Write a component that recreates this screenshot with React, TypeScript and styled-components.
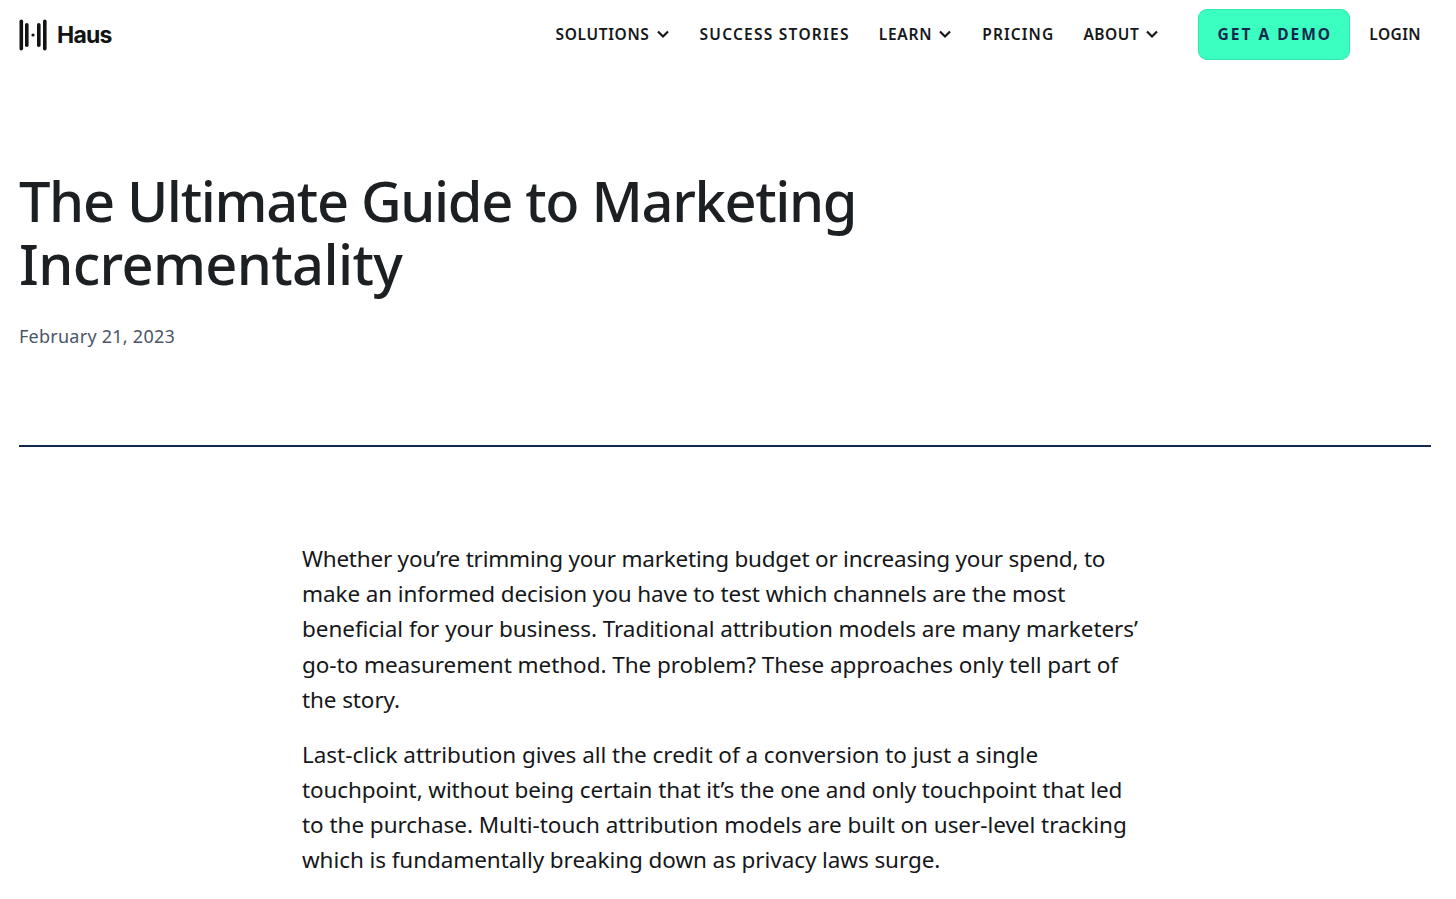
import React from 'react';
import styled, { createGlobalStyle } from 'styled-components';

const GlobalStyle = createGlobalStyle`
  html, body {
    margin: 0;
    padding: 0;
    background: #ffffff;
    font-family: "Noto Sans", "Open Sans", sans-serif;
  }
`;

const Page = styled.div`
  width: 1456px;
  height: 899px;
  overflow: hidden;
`;

const Header = styled.header`
  height: 69px;
  display: flex;
  align-items: center;
  justify-content: space-between;
  padding: 0 35px 0 19px;
`;

const Logo = styled.div`
  display: flex;
  align-items: center;
  gap: 9px;
  color: #111314;
`;

const LogoText = styled.span`
  font-family: "Inter", sans-serif;
  font-size: 23px;
  font-weight: 700;
  letter-spacing: -0.8px;
`;

const Nav = styled.nav`
  display: flex;
  align-items: center;
`;

const NavItem = styled.a<{ $gap?: number; $tracking?: number }>`
  display: flex;
  align-items: center;
  gap: 6px;
  margin-right: ${(p) => p.$gap ?? 29}px;
  padding-bottom: 2px;
  font-size: 15.5px;
  font-weight: 600;
  letter-spacing: ${(p) => p.$tracking ?? 0.55}px;
  color: #15171a;
  white-space: nowrap;
`;

const DemoButton = styled.a`
  display: flex;
  align-items: center;
  justify-content: center;
  width: 152px;
  height: 51px;
  margin-right: 19px;
  padding: 0 0 1px 1px;
  box-sizing: border-box;
  background: #3bffc1;
  border: 1px solid #2ee8b0;
  border-radius: 9px;
  font-size: 15.5px;
  font-weight: 700;
  letter-spacing: 2px;
  color: #12294d;
`;

const Hero = styled.section`
  padding: 100px 19px 0;
`;

const Title = styled.h1`
  margin: 0;
  font-size: 56px;
  line-height: 63px;
  font-weight: 500;
  color: #1d2022;
`;

const TitleLine = styled.span<{ $tracking: number }>`
  display: block;
  letter-spacing: ${(p) => p.$tracking}px;
`;

const DateLine = styled.p`
  margin: 28px 0 0;
  font-size: 18px;
  line-height: 26px;
  letter-spacing: 0.25px;
  color: #4a5568;
`;

const Rule = styled.hr`
  margin: 96px 25px 0 19px;
  border: 0;
  border-top: 2px solid #12294d;
  height: 0;
`;

const Article = styled.article`
  padding: 94px 0 0 302px;
`;

const Paragraph = styled.div`
  margin: 0 0 19.5px;
  font-size: 22.5px;
  line-height: 35.2px;
  color: #15171a;
  white-space: nowrap;
`;

const BodyLine = styled.span<{ $tracking: number }>`
  display: block;
  letter-spacing: ${(p) => p.$tracking}px;
`;

const Chevron = () => (
  <svg width="14" height="14" viewBox="0 0 14 14" fill="none">
    <path d="M2 4.5 L7 9.5 L12 4.5" stroke="#15171a" strokeWidth="2.2" />
  </svg>
);

const HausMark = () => (
  <svg width="29" height="32" viewBox="0 0 29 32" fill="#111314">
    <rect x="0.5" y="0.5" width="3.6" height="31" rx="1.8" />
    <rect x="6" y="4" width="3.6" height="24" rx="1.8" />
    <circle cx="14" cy="16" r="1.6" />
    <rect x="18" y="4" width="3.6" height="24" rx="1.8" />
    <rect x="24" y="0.5" width="3.6" height="31" rx="1.8" />
  </svg>
);

const paragraphs: [string, number][][] = [
  [
    ['Whether you’re trimming your marketing budget or increasing your spend, to', -0.22],
    ['make an informed decision you have to test which channels are the most', -0.1],
    ['beneficial for your business. Traditional attribution models are many marketers’', -0.06],
    ['go-to measurement method. The problem? These approaches only tell part of', -0.05],
    ['the story.', -0.1],
  ],
  [
    ['Last-click attribution gives all the credit of a conversion to just a single', -0.03],
    ['touchpoint, without being certain that it’s the one and only touchpoint that led', -0.1],
    ['to the purchase. Multi-touch attribution models are built on user-level tracking', -0.04],
    ['which is fundamentally breaking down as privacy laws surge.', -0.08],
  ],
];

const App: React.FC = () => {
  return (
    <Page>
      <GlobalStyle />
      <Header>
        <Logo>
          <HausMark />
          <LogoText>Haus</LogoText>
        </Logo>
        <Nav>
          <NavItem $gap={30} $tracking={0.65}>SOLUTIONS <Chevron /></NavItem>
          <NavItem $tracking={1.25}>SUCCESS STORIES</NavItem>
          <NavItem $gap={30} $tracking={0.75}>LEARN <Chevron /></NavItem>
          <NavItem $tracking={1.1}>PRICING</NavItem>
          <NavItem $gap={39}>ABOUT <Chevron /></NavItem>
          <DemoButton>GET A DEMO</DemoButton>
          <NavItem $gap={0} $tracking={0.4}>LOGIN</NavItem>
        </Nav>
      </Header>
      <Hero>
        <Title>
          <TitleLine $tracking={-1.35}>The Ultimate Guide to Marketing</TitleLine>
          <TitleLine $tracking={-0.64}>Incrementality</TitleLine>
        </Title>
        <DateLine>February 21, 2023</DateLine>
      </Hero>
      <Rule />
      <Article>
        {paragraphs.map((lines, i) => (
          <Paragraph key={i}>
            {lines.map(([text, tracking]) => (
              <BodyLine key={text} $tracking={tracking}>{text}</BodyLine>
            ))}
          </Paragraph>
        ))}
      </Article>
    </Page>
  );
};

export default App;
